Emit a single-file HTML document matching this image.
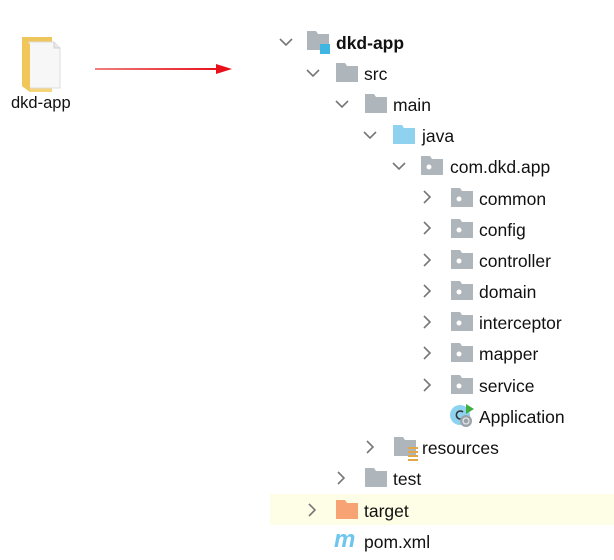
<!DOCTYPE html>
<html><head><meta charset="utf-8"><style>
body{margin:0;width:614px;height:560px;background:#fff;position:relative;overflow:hidden;font-family:"Liberation Sans","Noto Sans CJK SC",sans-serif;color:#111}
.a{position:absolute}
.t{position:absolute;font-size:17.5px;line-height:20px;white-space:nowrap;margin-top:2px}
</style></head><body>
<div class="a" style="left:270px;top:494px;width:344px;height:31px;background:#fefde6"></div>

<svg class="a" style="left:18px;top:34px" width="46" height="60" viewBox="0 0 46 60">
<path d="M4 3 H34 V58 H12 L4 52 Z" fill="#f6d47a"/>
<path d="M4 3 H34 V8 H4Z" fill="#efc65c"/>
<path d="M11 8 H36 L42 14 V54 H11 Z" fill="#f7f7f7" stroke="#dcdcdc" stroke-width="1"/>
<path d="M36 8 V14 H42" fill="#e8e8e8" stroke="#d0d0d0"/>
<path d="M4 52 L12 58 V10 L4 4Z" fill="#f2c75a"/>
</svg>
<div class="t" style="left:11px;top:91px;font-size:16.5px">dkd-app</div>
<svg class="a" style="left:94px;top:63px" width="142" height="12"><defs><linearGradient id="g" x1="0" x2="1"><stop offset="0" stop-color="#f08080"/><stop offset="1" stop-color="#e8101a"/></linearGradient></defs><rect x="1" y="5" width="124" height="2" fill="url(#g)"/><path d="M122 1 L138 6 L122 11Z" fill="#e8101a"/></svg>

<svg width="0" height="0" style="position:absolute"><defs>
<path id="f" d="M0 0 H9 L11 3 H22 V19 H0 Z"/>
<path id="dn" d="M1 4 L7 10 L13 4" fill="none" stroke="#777" stroke-width="1.6"/>
<path id="rt" d="M4 1 L10 7 L4 13" fill="none" stroke="#777" stroke-width="1.6"/>
</defs></svg>

<svg class="a" style="left:279px;top:35px" width="14" height="14"><use href="#dn"/></svg>
<svg class="a" style="left:307px;top:31px" width="24" height="24"><use href="#f" fill="#aeb5bb"/><rect x="13" y="13" width="10" height="10" fill="#3fb5e2"/></svg>
<div class="t" style="left:336px;top:31px;font-weight:bold">dkd-app</div>
<svg class="a" style="left:306px;top:66px" width="14" height="14"><use href="#dn"/></svg>
<svg class="a" style="left:336px;top:63px" width="22" height="19"><use href="#f" fill="#aeb5bb"/></svg>
<div class="t" style="left:364px;top:62px">src</div>
<svg class="a" style="left:335px;top:97px" width="14" height="14"><use href="#dn"/></svg>
<svg class="a" style="left:365px;top:94px" width="22" height="19"><use href="#f" fill="#aeb5bb"/></svg>
<div class="t" style="left:393px;top:93px">main</div>
<svg class="a" style="left:363px;top:128px" width="14" height="14"><use href="#dn"/></svg>
<svg class="a" style="left:393px;top:125px" width="22" height="19"><use href="#f" fill="#8ed2ef"/></svg>
<div class="t" style="left:422px;top:124px">java</div>
<svg class="a" style="left:392px;top:159px" width="14" height="14"><use href="#dn"/></svg>
<svg class="a" style="left:421px;top:156px" width="22" height="19"><use href="#f" fill="#aeb5bb"/><circle cx="8" cy="11" r="2.5" fill="#fff"/></svg>
<div class="t" style="left:450px;top:155px">com.dkd.app</div>

<svg class="a" style="left:420px;top:190px" width="14" height="14"><use href="#rt"/></svg>
<svg class="a" style="left:451px;top:188px" width="22" height="19"><use href="#f" fill="#aeb5bb"/><circle cx="8" cy="11" r="2.5" fill="#fff"/></svg>
<div class="t" style="left:479px;top:187px">common</div>
<svg class="a" style="left:420px;top:221px" width="14" height="14"><use href="#rt"/></svg>
<svg class="a" style="left:451px;top:219px" width="22" height="19"><use href="#f" fill="#aeb5bb"/><circle cx="8" cy="11" r="2.5" fill="#fff"/></svg>
<div class="t" style="left:479px;top:218px">config</div>
<svg class="a" style="left:420px;top:253px" width="14" height="14"><use href="#rt"/></svg>
<svg class="a" style="left:451px;top:250px" width="22" height="19"><use href="#f" fill="#aeb5bb"/><circle cx="8" cy="11" r="2.5" fill="#fff"/></svg>
<div class="t" style="left:479px;top:249px">controller</div>
<svg class="a" style="left:420px;top:284px" width="14" height="14"><use href="#rt"/></svg>
<svg class="a" style="left:451px;top:281px" width="22" height="19"><use href="#f" fill="#aeb5bb"/><circle cx="8" cy="11" r="2.5" fill="#fff"/></svg>
<div class="t" style="left:479px;top:280px">domain</div>
<svg class="a" style="left:420px;top:315px" width="14" height="14"><use href="#rt"/></svg>
<svg class="a" style="left:451px;top:312px" width="22" height="19"><use href="#f" fill="#aeb5bb"/><circle cx="8" cy="11" r="2.5" fill="#fff"/></svg>
<div class="t" style="left:479px;top:311px">interceptor</div>
<svg class="a" style="left:420px;top:346px" width="14" height="14"><use href="#rt"/></svg>
<svg class="a" style="left:451px;top:343px" width="22" height="19"><use href="#f" fill="#aeb5bb"/><circle cx="8" cy="11" r="2.5" fill="#fff"/></svg>
<div class="t" style="left:479px;top:342px">mapper</div>
<svg class="a" style="left:420px;top:378px" width="14" height="14"><use href="#rt"/></svg>
<svg class="a" style="left:451px;top:375px" width="22" height="19"><use href="#f" fill="#aeb5bb"/><circle cx="8" cy="11" r="2.5" fill="#fff"/></svg>
<div class="t" style="left:479px;top:374px">service</div>
<svg class="a" style="left:449px;top:403px" width="26" height="26">
<circle cx="11" cy="12" r="10" fill="#8dd3ef"/>
<path d="M14 9 A4 4 0 1 0 14 15" fill="none" stroke="#333" stroke-width="1.6"/>
<path d="M17 1 L25 6 L17 11Z" fill="#3fae3f"/>
<circle cx="17" cy="18" r="6" fill="#9aa3aa"/><circle cx="17" cy="18" r="3" fill="none" stroke="#e0e4e7" stroke-width="1.3"/>
</svg>
<div class="t" style="left:479px;top:405px">Application</div>
<svg class="a" style="left:363px;top:440px" width="14" height="14"><use href="#rt"/></svg>
<svg class="a" style="left:394px;top:437px" width="26" height="24"><use href="#f" fill="#aeb5bb"/><g fill="#e3a74a"><rect x="14" y="10" width="10" height="2"/><rect x="14" y="14" width="10" height="2"/><rect x="14" y="18" width="10" height="2"/><rect x="14" y="22" width="10" height="2"/></g></svg>
<div class="t" style="left:422px;top:436px">resources</div>
<svg class="a" style="left:334px;top:471px" width="14" height="14"><use href="#rt"/></svg>
<svg class="a" style="left:365px;top:468px" width="22" height="19"><use href="#f" fill="#aeb5bb"/></svg>
<div class="t" style="left:393px;top:467px">test</div>
<svg class="a" style="left:305px;top:503px" width="14" height="14"><use href="#rt"/></svg>
<svg class="a" style="left:336px;top:500px" width="22" height="19"><use href="#f" fill="#f7a373"/></svg>
<div class="t" style="left:364px;top:499px">target</div>
<div class="t" style="left:334px;top:527px;font-size:24px;font-style:italic;font-weight:bold;color:#6ec6ee;line-height:26px;margin-top:0">m</div>
<div class="t" style="left:364px;top:530px">pom.xml</div>
</body></html>
